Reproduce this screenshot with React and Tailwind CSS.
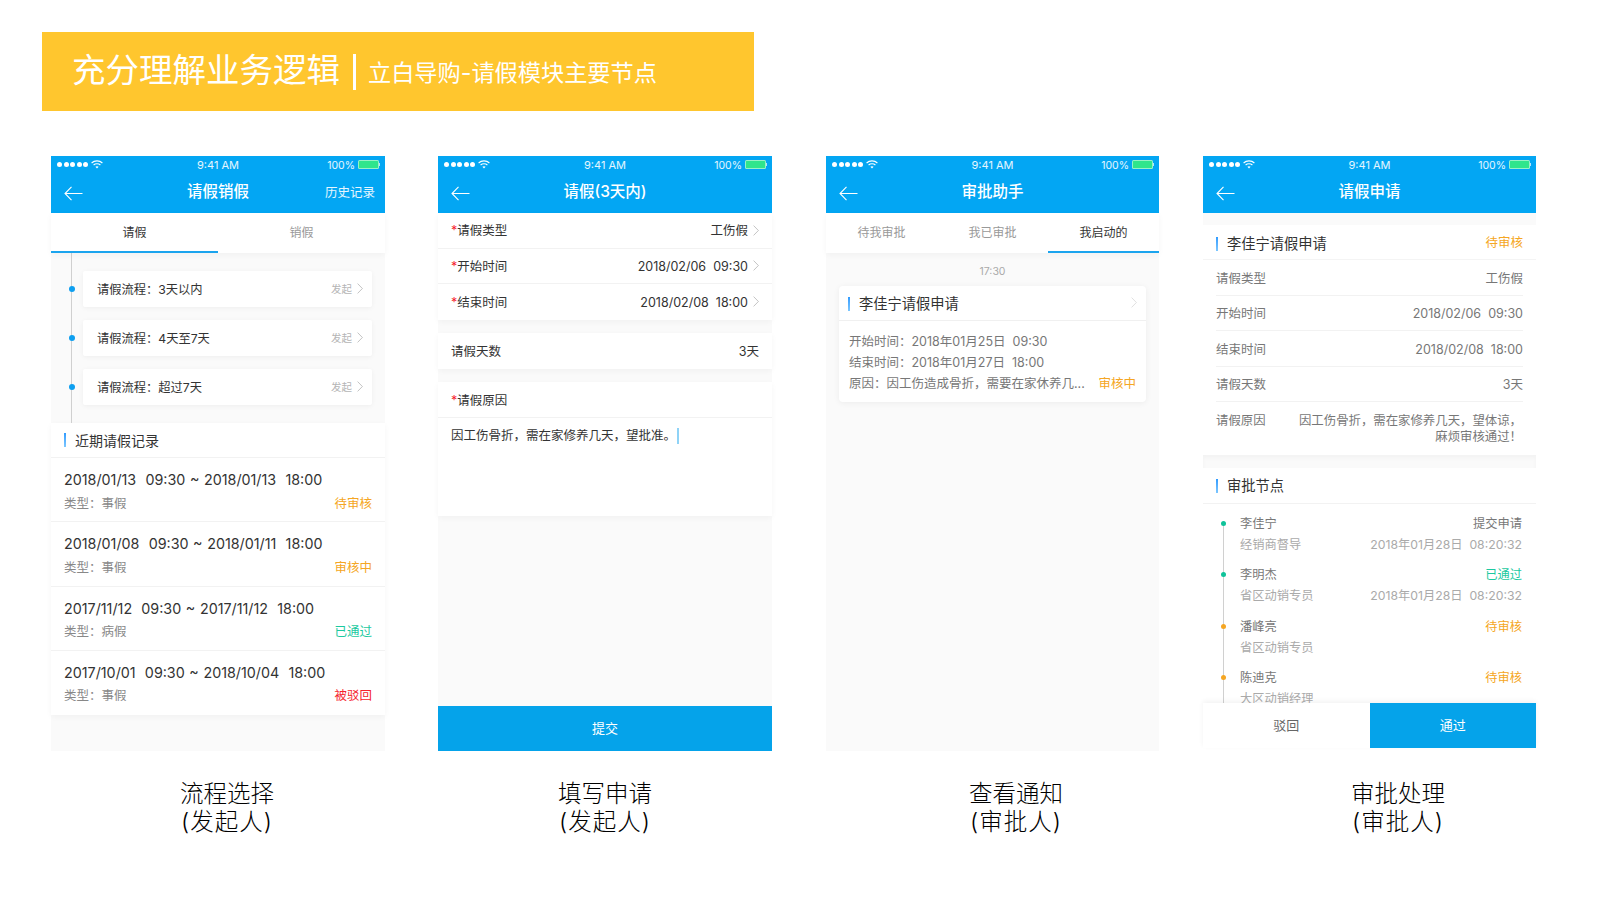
import React from 'react';

const Chevron = ({ className = 'text-[#b5b5b5]' }) => (
  <svg width="6" height="11" viewBox="0 0 6 11" fill="none" className={`-mt-[3px] ${className}`}>
    <path d="M0.6 0.6 L5.4 5.5 L0.6 10.4" stroke="currentColor" strokeWidth="0.8" />
  </svg>
);

const StatusBar = () => (
  <div className="relative flex h-[17px] items-center justify-between pl-[6px] pr-[5px] text-[11px] leading-[17px] text-white/90">
    <div className="flex items-center gap-[1.5px]">
      {[0, 1, 2, 3, 4].map((i) => (
        <span key={i} className="h-[5px] w-[5px] rounded-full bg-white" />
      ))}
      <svg width="12" height="9" viewBox="0 0 12 9" fill="none" className="ml-[1px]">
        <path d="M0.6 3 C3.6 0.2 8.4 0.2 11.4 3" stroke="white" strokeWidth="1.1" />
        <path d="M2.6 5 C4.4 3.3 7.6 3.3 9.4 5" stroke="white" strokeWidth="1.1" />
        <path d="M6 8.6 L4.4 6.8 C5.3 6.1 6.7 6.1 7.6 6.8 Z" fill="white" />
      </svg>
    </div>
    <span className="absolute left-0 right-0 top-[1px] text-center">9:41 AM</span>
    <div className="flex items-center gap-[3px]">
      <span className="pt-[1px] text-[10.5px]">100%</span>
      <span className="flex h-[9px] w-[21px] rounded-[1.5px] border border-white/50 bg-[#2fe58c]" />
      <span className="ml-[-3px] h-[3px] w-[1px] bg-white/70" />
    </div>
  </div>
);

const Header = ({ title, right }) => (
  <div className="h-[57px] bg-[#03a6f3]">
    <StatusBar />
    <div className="relative flex h-[40px] items-center pb-[3px] pl-[13px] pr-[10px]">
      <svg width="19" height="15" viewBox="0 0 19 15" fill="none" className="mt-[4px]">
        <path d="M7.5 0.8 L1 7.5 L7.5 14.2 M1 7.5 H18.5" stroke="white" strokeWidth="1.1" />
      </svg>
      <span className="absolute left-0 right-0 top-[7px] text-center text-[15.5px] font-medium text-white">{title}</span>
      {right && <span className="ml-auto pt-[4px] text-[12.5px] text-white/90">{right}</span>}
    </div>
  </div>
);

const Tabs = ({ items, active }) => (
  <div className="relative z-10 flex h-[40px] bg-white shadow-[0_2px_6px_rgba(0,0,0,0.04)]">
    {items.map((t, i) => (
      <div
        key={t}
        className={`flex flex-1 items-center justify-center border-b-2 pt-[2px] text-[12px] ${
          i === active ? 'border-[#1ba4ee] text-[#333]' : 'border-transparent text-[#999]'
        }`}
      >
        {t}
      </div>
    ))}
  </div>
);

const SectionBar = () => <span className="h-[14px] w-[2px] bg-gradient-to-b from-[#2f9bff] to-[#7cc7ff]" />;

const Star = () => <span className="text-[#f5222d]">*</span>;

const FlowCard = ({ label }) => (
  <div className="relative flex h-[36px] items-center rounded-[2px] bg-white pl-[14px] pr-[9px] pt-[2px] text-[12.25px] text-[#333] shadow-[0_1px_5px_rgba(0,0,0,0.05)]">
    <span className="absolute left-[-14.5px] top-[15px] h-[6px] w-[6px] rounded-full bg-[#0e9ff0]" />
    <span>请假流程：{label}</span>
    <span className="ml-auto mr-[5px] text-[10.5px] text-[#b5b5b5]">发起</span>
    <Chevron />
  </div>
);

const records = [
  { date: '2018/01/13  09:30 ~ 2018/01/13  18:00', type: '事假', status: '待审核', color: 'text-[#f5a623]' },
  { date: '2018/01/08  09:30 ~ 2018/01/11  18:00', type: '事假', status: '审核中', color: 'text-[#f5a623]' },
  { date: '2017/11/12  09:30 ~ 2017/11/12  18:00', type: '病假', status: '已通过', color: 'text-[#1cc9a0]' },
  { date: '2017/10/01  09:30 ~ 2018/10/04  18:00', type: '事假', status: '被驳回', color: 'text-[#f5222d]' },
];

const ScreenOne = () => (
  <div className="flex h-[595px] w-[334px] flex-col bg-[#fafafa]">
    <Header title="请假销假" right="历史记录" />
    <Tabs items={['请假', '销假']} active={0} />
    <div className="relative h-[170px] pl-[32px] pr-[13px] pt-[18px]">
      <span className="absolute bottom-0 left-[20px] top-0 w-px bg-[#d0d0d0]" />
      <div className="flex flex-col gap-[13px]">
        <FlowCard label="3天以内" />
        <FlowCard label="4天至7天" />
        <FlowCard label="超过7天" />
      </div>
    </div>
    <div className="bg-white shadow-[0_2px_6px_rgba(0,0,0,0.04)]">
      <div className="flex h-[35px] items-center gap-[9px] border-b border-[#f2f2f2] pl-[13px] text-[14px] text-[#333]">
        <SectionBar />
        近期请假记录
      </div>
      {records.map((r) => (
        <div key={r.date} className="h-[64.25px] border-b border-[#f2f2f2] px-[13px] pt-[12px] last:border-b-0">
          <div className="whitespace-pre text-[14.3px] leading-[20px] text-[#333] [word-spacing:0.6px]">{r.date}</div>
          <div className="mt-[3.5px] flex justify-between text-[12.5px] leading-[20px]">
            <span className="text-[#888]">类型：{r.type}</span>
            <span className={r.color}>{r.status}</span>
          </div>
        </div>
      ))}
    </div>
  </div>
);

const FormRow = ({ star, label, value, arrow, last, tall }) => (
  <div className={`flex items-center px-[13px] text-[12.5px] text-[#333] ${tall ? 'h-[36px] pt-[4px]' : 'h-[35.5px] pt-[3px]'} ${last ? '' : 'border-b border-[#f2f2f2]'}`}>
    <span>
      {star && <Star />}
      {label}
    </span>
    {value && <span className="ml-auto whitespace-pre">{value}</span>}
    {arrow && (
      <span className="ml-[5px]">
        <Chevron />
      </span>
    )}
  </div>
);

const ScreenTwo = () => (
  <div className="flex h-[595px] w-[334px] flex-col bg-[#fafafa]">
    <Header title="请假(3天内)" />
    <div className="bg-white shadow-[0_2px_6px_rgba(0,0,0,0.04)]">
      <FormRow star label="请假类型" value="工伤假" arrow />
      <FormRow star label="开始时间" value="2018/02/06  09:30" arrow />
      <FormRow star label="结束时间" value="2018/02/08  18:00" arrow last />
    </div>
    <div className="mt-[13px] bg-white shadow-[0_2px_6px_rgba(0,0,0,0.04)]">
      <FormRow label="请假天数" value="3天" last tall />
    </div>
    <div className="mt-[13px] h-[134px] bg-white shadow-[0_2px_6px_rgba(0,0,0,0.04)]">
      <FormRow star label="请假原因" tall />
      <div className="flex items-center pl-[13px] pt-[10px] text-[12.5px] leading-[16px] text-[#333]">
        因工伤骨折，需在家修养几天，望批准。
        <span className="ml-[1px] h-[16px] w-[2px] bg-[#8fd3f7]" />
      </div>
    </div>
    <div className="mt-auto flex h-[45px] items-center justify-center bg-[#05a3ea] text-[13px] text-white">提交</div>
  </div>
);

const ScreenThree = () => (
  <div className="flex h-[595px] w-[333px] flex-col bg-[#fafafa]">
    <Header title="审批助手" />
    <Tabs items={['待我审批', '我已审批', '我启动的']} active={2} />
    <div className="mt-[12px] text-center text-[10.5px] leading-[14px] text-[#aaa]">17:30</div>
    <div className="mx-[13px] mt-[7px] h-[116px] rounded-[4px] bg-white shadow-[0_1px_6px_rgba(0,0,0,0.06)]">
      <div className="flex h-[35px] items-center gap-[9px] border-b border-[#f0f0f0] px-[9px] pt-[2px] text-[14.25px] text-[#333]">
        <SectionBar />
        李佳宁请假申请
        <span className="ml-auto">
          <Chevron className="text-[#d8d8d8]" />
        </span>
      </div>
      <div className="whitespace-pre px-[10px] pt-[10px] text-[12.5px] leading-[21.2px] text-[#777]">
        <div>开始时间：2018年01月25日  09:30</div>
        <div>结束时间：2018年01月27日  18:00</div>
        <div className="flex justify-between">
          <span>原因：因工伤造成骨折，需要在家休养几...</span>
          <span className="text-[#f5a623]">审核中</span>
        </div>
      </div>
    </div>
  </div>
);

const DetailRow = ({ label, value }) => (
  <div className="flex h-[35.5px] items-center justify-between border-b border-[#f2f2f2] pt-[4px] text-[12.5px] text-[#777]">
    <span>{label}</span>
    <span className="whitespace-pre">{value}</span>
  </div>
);

const nodes = [
  { name: '李佳宁', role: '经销商督导', status: '提交申请', statusColor: 'text-[#777]', dot: 'bg-[#0fc39a]', time: '2018年01月28日  08:20:32' },
  { name: '李明杰', role: '省区动销专员', status: '已通过', statusColor: 'text-[#1cc9a0]', dot: 'bg-[#0fc39a]', time: '2018年01月28日  08:20:32' },
  { name: '潘峰亮', role: '省区动销专员', status: '待审核', statusColor: 'text-[#f5a623]', dot: 'bg-[#f5a623]' },
  { name: '陈迪克', role: '大区动销经理', status: '待审核', statusColor: 'text-[#f5a623]', dot: 'bg-[#f5a623]' },
];

const ScreenFour = () => (
  <div className="flex h-[592px] w-[333px] flex-col bg-white">
    <Header title="请假申请" />
    <div className="h-[12px] bg-[#fafafa]" />
    <div className="flex h-[35px] items-center gap-[9px] border-b border-[#f4f4f4] px-[13px] pt-[3px] text-[14.25px] text-[#333]">
      <SectionBar />
      李佳宁请假申请
      <span className="ml-auto text-[12.5px] text-[#f5a623]">待审核</span>
    </div>
    <div className="px-[13px]">
      <DetailRow label="请假类型" value="工伤假" />
      <DetailRow label="开始时间" value="2018/02/06  09:30" />
      <DetailRow label="结束时间" value="2018/02/08  18:00" />
      <DetailRow label="请假天数" value="3天" />
      <div className="flex h-[53px] justify-between pt-[11px] text-[12.4px] leading-[16px] text-[#777]">
        <span>请假原因</span>
        <span className="pr-[1px] text-right">
          因工伤骨折，需在家修养几天，望体谅，
          <br />
          麻烦审核通过！
        </span>
      </div>
    </div>
    <div className="h-[13px] bg-[#fafafa] shadow-[inset_0_3px_4px_rgba(0,0,0,0.03)]" />
    <div className="flex h-[36px] items-center gap-[9px] border-b border-[#f2f2f2] pl-[13px] text-[14.25px] text-[#333]">
      <SectionBar />
      审批节点
    </div>
    <div className="relative min-h-0 flex-1 overflow-hidden">
      <span className="absolute bottom-0 left-[20px] top-[19px] w-px bg-[#d0d0d0]" />
      {nodes.map((n) => (
        <div key={n.name} className="relative h-[51.3px] pl-[37px] pr-[14px] pt-[9px] text-[12.25px] leading-[21px]">
          <span className={`absolute left-[18px] top-[17px] h-[5px] w-[5px] rounded-full ${n.dot}`} />
          <div className="flex justify-between">
            <span className="text-[#777]">{n.name}</span>
            <span className={n.statusColor}>{n.status}</span>
          </div>
          <div className="flex justify-between whitespace-pre text-[#aaa]">
            <span>{n.role}</span>
            {n.time && <span>{n.time}</span>}
          </div>
        </div>
      ))}
    </div>
    <div className="relative flex h-[45px] shadow-[0_-2px_5px_rgba(0,0,0,0.05)]">
      <div className="flex flex-1 items-center justify-center bg-white text-[13px] text-[#666]">驳回</div>
      <div className="flex flex-1 items-center justify-center bg-[#05a3ea] text-[13px] text-white">通过</div>
    </div>
  </div>
);

const Caption = ({ title, who, className = '' }) => (
  <div className={`w-[200px] text-center text-[23.5px] font-light leading-[28px] text-black ${className}`}>
    <div>{title}</div>
    <div className="tracking-[1px]">({who})</div>
  </div>
);

export default function App() {
  return (
    <div className="h-[900px] w-[1600px] overflow-hidden bg-white pt-[32px] font-['Inter','Noto_Sans_CJK_SC',sans-serif]">
      {/* Banner */}
      <div className="ml-[42px] flex h-[79px] w-[712px] items-center bg-[#ffc62e] pl-[30px] text-white">
        <span className="mb-[2px] text-[33.5px] leading-none">充分理解业务逻辑</span>
        <span className="ml-[13px] h-[36px] w-[3px] bg-white" />
        <span className="ml-[12px] mt-[4px] text-[23.2px] leading-none">立白导购-请假模块主要节点</span>
      </div>

      {/* Phones */}
      <div className="ml-[51px] mt-[45px] flex h-[595px] items-start">
        <ScreenOne />
        <div className="ml-[53px]">
          <ScreenTwo />
        </div>
        <div className="ml-[54px]">
          <ScreenThree />
        </div>
        <div className="ml-[44px]">
          <ScreenFour />
        </div>
      </div>

      {/* Captions */}
      <div className="ml-[127px] mt-[29px] flex">
        <Caption title="流程选择" who="发起人" />
        <Caption title="填写申请" who="发起人" className="ml-[178px]" />
        <Caption title="查看通知" who="审批人" className="ml-[211px]" />
        <Caption title="审批处理" who="审批人" className="ml-[182px]" />
      </div>
    </div>
  );
}
